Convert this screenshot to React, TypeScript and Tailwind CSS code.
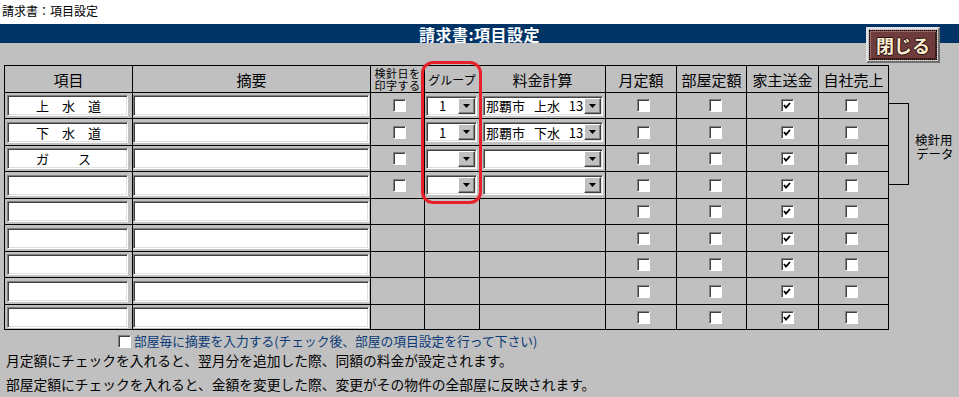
import React from "react";

const FONT = "font-['Noto_Sans_CJK_JP','Noto_Sans',sans-serif]";

function Cb({ checked = false }: { checked?: boolean }) {
  return (
    <div className="w-[13px] h-[13px] bg-white border border-t-[#808080] border-l-[#808080] border-r-white border-b-white shadow-[inset_1px_1px_0_#404040] flex items-center justify-center">
      {checked && (
        <svg width="8" height="7" viewBox="0 0 8 7">
          <path d="M1 3 L3 5.5 L7 1" stroke="#000" strokeWidth="1.8" fill="none" />
        </svg>
      )}
    </div>
  );
}

function TextBox({ className = "", children }: { className?: string; children?: React.ReactNode }) {
  return (
    <div
      className={`h-[21px] bg-white border border-t-[#808080] border-l-[#808080] border-r-white border-b-white shadow-[inset_1px_1px_0_#404040,inset_-1px_-1px_0_#dfdfdf] flex items-center text-[13px] leading-none text-black whitespace-pre ${className}`}
    >
      {children}
    </div>
  );
}

function Arrow() {
  return (
    <div className="w-[17px] h-full bg-[#c0c0c0] border border-t-white border-l-white border-r-[#404040] border-b-[#404040] shadow-[inset_-1px_-1px_0_#808080] flex items-center justify-center shrink-0">
      <svg width="7" height="4" viewBox="0 0 7 4">
        <path d="M0 0 H7 L3.5 4 Z" fill="#000" />
      </svg>
    </div>
  );
}

function Select({ className = "", text = "", textClass = "" }: { className?: string; text?: string; textClass?: string }) {
  return (
    <div
      className={`h-[20px] bg-white border border-t-[#808080] border-l-[#808080] border-r-white border-b-white shadow-[inset_1px_1px_0_#404040,inset_-1px_-1px_0_#dfdfdf] flex items-stretch p-[1px] ${className}`}
    >
      <div className={`flex-1 min-w-0 overflow-hidden whitespace-pre flex items-center leading-none text-black ${textClass}`}>{text}</div>
      <Arrow />
    </div>
  );
}

const cell = "bg-[#c0c0c0] flex items-center";

type Row = {
  name: string;
  group?: string;
  calc?: string;
  hasTop: boolean;
};

const rows: Row[] = [
  { name: "上　水　道", group: "1", calc: "那覇市 上水 13", hasTop: true },
  { name: "下　水　道", group: "1", calc: "那覇市 下水 13", hasTop: true },
  { name: "ガ　　 ス", group: "", calc: "", hasTop: true },
  { name: "", group: "", calc: "", hasTop: true },
  { name: "", hasTop: false },
  { name: "", hasTop: false },
  { name: "", hasTop: false },
  { name: "", hasTop: false },
  { name: "", hasTop: false },
];

export default function App() {
  return (
    <div className={`relative w-[959px] h-[397px] overflow-hidden bg-[#c0c0c0] text-black ${FONT}`}>
      <div className="h-[24px] bg-white text-[12px] leading-none pl-[2px] pt-[5px]">請求書：項目設定</div>
      <div className="h-[19px] bg-[#003366] text-white font-bold text-[16px] leading-none flex items-center justify-center tracking-[0.5px]">
        請求書:項目設定
      </div>

      <div className="flex pl-[4px] pt-[22px]">
        <div className="grid grid-cols-[127px_237px_53px_54px_125px_70px_69px_71px_69px] grid-rows-[26px_25px_26px_25px_26px_25px_26px_25px_26px_24px] gap-px bg-black border border-black">
          <div className={`${cell} justify-center text-[15px] leading-none`}>項目</div>
          <div className={`${cell} justify-center text-[15px] leading-none`}>摘要</div>
          <div className={`${cell} flex-col justify-center text-[11px] leading-[12px] tracking-[0.5px]`}>
            <span>検針日を</span>
            <span>印字する</span>
          </div>
          <div className={`${cell} justify-center text-[12px] leading-none pt-[1px]`}>グループ</div>
          <div className={`${cell} justify-center text-[15px] leading-none`}>料金計算</div>
          <div className={`${cell} justify-center text-[15px] leading-none`}>月定額</div>
          <div className={`${cell} justify-center text-[15px] leading-none`}>部屋定額</div>
          <div className={`${cell} justify-center text-[15px] leading-none`}>家主送金</div>
          <div className={`${cell} justify-center text-[15px] leading-none`}>自社売上</div>

          {rows.map((r, i) => (
            <React.Fragment key={i}>
              <div className={`${cell} pl-[2px]`}>
                <TextBox className="w-[121px] pl-[28px]">{r.name}</TextBox>
              </div>
              <div className={cell}>
                <TextBox className="w-[236px]" />
              </div>
              <div className={`${cell} justify-center pl-[3px]`}>{r.hasTop && <Cb />}</div>
              <div className={`${cell} pl-[1px]`}>
                {r.hasTop && <Select className="w-[51px]" text={r.group} textClass="text-[13px] pl-[11px]" />}
              </div>
              <div className={`${cell} pl-[3px]`}>
                {r.hasTop && (
                  <Select className="w-[120px]" text={r.calc} textClass="text-[13px] pl-[1px] [word-spacing:6px]" />
                )}
              </div>
              <div className={`${cell} justify-center pl-[5px]`}>
                <Cb />
              </div>
              <div className={`${cell} justify-center pl-[8px]`}>
                <Cb />
              </div>
              <div className={`${cell} justify-center pl-[9px]`}>
                <Cb checked />
              </div>
              <div className={`${cell} justify-center pr-[4px]`}>
                <Cb />
              </div>
            </React.Fragment>
          ))}
        </div>

        <div className="flex items-center mt-[38px] h-[82px]">
          <div className="w-[20px] h-[82px] border-t border-r border-b border-black" />
          <div className="ml-[6px] flex flex-col text-[12.5px] leading-[14px] mt-[6px]">
            <span>検針用</span>
            <span className="pl-[1px]">データ</span>
          </div>
        </div>
      </div>

      <div className="flex items-center h-[16px] mt-[3px] pl-[118px] gap-[3px]">
        <Cb />
        <span className="text-[12.75px] leading-none text-[#0a3a78]">部屋毎に摘要を入力する(チェック後、部屋の項目設定を行って下さい)</span>
      </div>
      <div className="h-[20px] mt-[2px] pl-[6px] flex items-center text-[13.75px] leading-none">
        月定額にチェックを入れると、翌月分を追加した際、同額の料金が設定されます。
      </div>
      <div className="h-[20px] mt-[4px] pl-[6px] flex items-center text-[13.75px] leading-none">
        部屋定額にチェックを入れると、金額を変更した際、変更がその物件の全部屋に反映されます。
      </div>

      {/* close button */}
      <div className="absolute left-[866px] top-[27px] w-[74px] h-[36px] bg-[#c8c8c8] border-2 border-t-[#e0e0e0] border-l-[#e0e0e0] border-r-[#707070] border-b-[#707070] p-[1px]">
        <div className="w-full h-full border border-dotted border-black bg-[#6e3c3c] shadow-[inset_1px_1px_0_#9a6a6a,inset_-1px_-1px_0_#3e1e1e] flex items-center justify-center">
          <span className="text-[18px] font-bold leading-none text-[#f8ecd0] [text-shadow:1px_0_0_#2a0d0d,-1px_0_0_#2a0d0d,0_1px_0_#2a0d0d,0_-1px_0_#2a0d0d]">
            閉じる
          </span>
        </div>
      </div>

      {/* red annotation */}
      <div className="absolute left-[421px] top-[61px] w-[61px] h-[143px] border-[3px] border-[#e8202a] rounded-[12px]" />
    </div>
  );
}
